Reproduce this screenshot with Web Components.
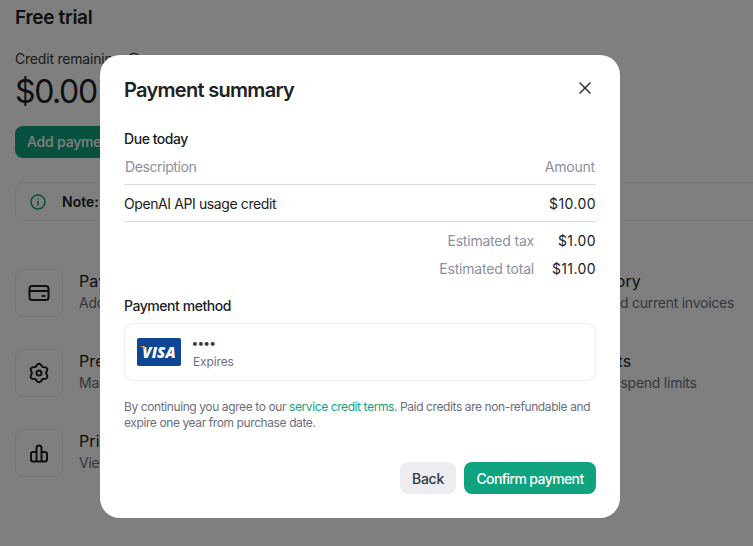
<!DOCTYPE html>
<html lang="en">
<head>
<meta charset="utf-8">
<title>Payment summary</title>
<style>
  html, body { margin: 0; height: 100%; overflow: hidden; background: #fff; }
  body { font-family: Inter, "Liberation Sans", sans-serif; color: #202123; }
</style>
</head>
<body>
<billing-page>
  <billing-link slot="links" title="Payment methods" text="Add or manage payment method" icon="card"></billing-link>
  <billing-link slot="links" title="Billing history" text="View past and current invoices" icon="none"></billing-link>
  <billing-link slot="links" title="Preferences" text="Manage billing information" icon="gear"></billing-link>
  <billing-link slot="links" title="Usage limits" text="Update your spend limits" icon="none"></billing-link>
  <billing-link slot="links" title="Pricing" text="View pricing and FAQs" icon="bars"></billing-link>
</billing-page>
<modal-backdrop>
  <payment-summary>
    <amount-row slot="totals" label="Estimated tax" value="$1.00"></amount-row>
    <amount-row slot="totals" label="Estimated total" value="$11.00"></amount-row>
    <payment-card slot="method"></payment-card>
  </payment-summary>
</modal-backdrop>

<script>
// Page behind the dialog
class BillingPage extends HTMLElement {
  constructor() {
    super();
    this.attachShadow({ mode: 'open' });
  }

  connectedCallback() {
    this.shadowRoot.innerHTML = `
      <style>
        :host { display: block; padding: 7px 0 0 15px; color: #202123; }
        h1 { margin: 0; font-size: 19px; line-height: 22px; font-weight: 600; letter-spacing: -0.3px; }
        .credit { display: flex; align-items: center; gap: 6px; margin-top: 21px; font-size: 14px; line-height: 18px; color: #353740; letter-spacing: -0.2px; }
        .credit svg { width: 14px; height: 14px; }
        .amount { font-size: 32px; line-height: 40px; margin-top: 4px; letter-spacing: -1.4px; color: #202123; }
        .add { display: inline-block; margin-top: 14px; height: 32px; line-height: 32px; padding: 0 12px; border-radius: 8px; background: #10a37f; color: #fff; font-size: 14px; font-weight: 500; letter-spacing: -0.2px; }
        .note { display: flex; align-items: center; gap: 16px; margin-top: 24px; height: 37px; padding-left: 14px; border: 1px solid #ececf1; border-right: 0; border-radius: 8px 0 0 8px; font-size: 14px; }
        .note svg { width: 16px; height: 16px; flex: none; }
        .note b { font-weight: 600; }
        .links { display: grid; grid-template-columns: 459px 1fr; gap: 32px 0; margin-top: 48px; }
      </style>
      <h1>Free trial</h1>
      <div class="credit">Credit remaining
        <svg viewBox="0 0 16 16" fill="none" stroke="#353740" stroke-width="1.4"><circle cx="8" cy="8" r="6.5"/></svg>
      </div>
      <div class="amount">$0.00</div>
      <div class="add">Add payment details</div>
      <div class="note">
        <svg viewBox="0 0 16 16" fill="none" stroke="#10a37f" stroke-width="1.5" stroke-linecap="round"><circle cx="8" cy="8" r="7"/><path d="M8 7.500v3.600M8 4.900v.1"/></svg>
        <span><b>Note:</b> This does not reflect the status of your bill.</span>
      </div>
      <div class="links"><slot name="links"></slot></div>
    `;
  }
}

const ICONS = {
  card: '<rect x="2.500" y="5" width="19" height="14" rx="2.500"/><path d="M2.500 10h19M15.500 15h2"/>',
  gear: '<path d="M8.500 5.940Q12 -.5 15.500 5.940Q22.800 5.750 19 12Q22.800 18.250 15.500 18.060Q12 24.500 8.500 18.060Q1.200 18.250 5 12Q1.200 5.750 8.500 5.940z"/><circle cx="12" cy="12" r="2.500"/>',
  bars: '<path d="M9.500 20.500V7a2.500 2.500 0 0 1 5 0v13.500M9.500 20.500V11H6a2 2 0 0 0-2 2v5.500a2 2 0 0 0 2 2zM14.500 20.500V11H18a2 2 0 0 1 2 2v5.500a2 2 0 0 1-2 2zM9.500 20.500h5"/>'
};

class BillingLink extends HTMLElement {
  constructor() {
    super();
    this.attachShadow({ mode: 'open' });
  }

  connectedCallback() {
    const icon = ICONS[this.getAttribute('icon')] || '';
    this.shadowRoot.innerHTML = `
      <style>
        :host { display: flex; gap: 16px; height: 48px; }
        .box { width: 46px; height: 46px; border: 1px solid #ececf1; border-radius: 8px; display: flex; align-items: center; justify-content: center; flex: none; }
        svg { width: 24px; height: 24px; fill: none; stroke: #202123; stroke-width: 2; stroke-linecap: round; stroke-linejoin: round; }
        .text { padding-top: 1px; }
        .t { font-size: 16px; line-height: 22px; color: #202123; letter-spacing: 0.1px; white-space: nowrap; }
        .d { font-size: 14px; line-height: 20px; margin-top: 1px; color: #6e6e80; letter-spacing: -0.25px; white-space: nowrap; }
      </style>
      <div class="box"><svg viewBox="0 0 24 24">${icon}</svg></div>
      <div class="text">
        <div class="t">${this.getAttribute('title')}</div>
        <div class="d">${this.getAttribute('text')}</div>
      </div>
    `;
  }
}

// Dark layer and dialog on top of it
class ModalBackdrop extends HTMLElement {
  constructor() {
    super();
    this.attachShadow({ mode: 'open' });
  }

  connectedCallback() {
    this.shadowRoot.innerHTML = `
      <style>
        :host { position: fixed; inset: 0; background: rgba(0, 0, 0, 0.5); display: block; }
      </style>
      <slot></slot>
    `;
  }
}

class PaymentSummary extends HTMLElement {
  constructor() {
    super();
    this.attachShadow({ mode: 'open' });
  }

  connectedCallback() {
    this.shadowRoot.innerHTML = `
      <style>
        :host { position: absolute; left: 100px; top: 55px; width: 472px; height: 415px; padding: 24px; background: #fff; border-radius: 20px; display: block; color: #202123; }
        header { display: flex; justify-content: space-between; align-items: center; height: 22px; }
        h2 { margin: 0; font-size: 20px; line-height: 22px; font-weight: 600; letter-spacing: -0.7px; }
        .close { width: 16px; height: 16px; margin-right: 3px; margin-top: -4px; }
        h3 { margin: 0; font-size: 14px; line-height: 18px; font-weight: 500; letter-spacing: -0.45px; color: #202123; }
        .due { margin-top: 29px; }
        .head, .line { display: flex; justify-content: space-between; letter-spacing: -0.4px; font-size: 14px; line-height: 20px; }
        .head { color: #8e8ea0; margin-top: 9px; padding: 0 1px 7px; border-bottom: 1px solid #d9d9e3; }
        .head span:last-child { letter-spacing: -0.2px; }
        .line { padding: 9px 0 7px; border-bottom: 1px solid #d9d9e3; }
        .line span:last-child { letter-spacing: 0.4px; }
        .totals { display: flex; flex-direction: column; gap: 8px; margin-top: 9px; }
        .method { margin-top: 18px; }
        .card { margin-top: 8px; }
        p { margin: 18px 0 0; font-size: 12px; line-height: 16px; color: #6e6e80; letter-spacing: -0.4px; }
        a { color: #10a37f; text-decoration: none; }
        footer { display: flex; justify-content: flex-end; gap: 8px; margin-top: 31px; }
        button { height: 32px; border: 0; border-radius: 8px; padding: 0; font: 500 14px Inter, "Liberation Sans", sans-serif; letter-spacing: -0.25px; }
        .back { width: 56px; background: #ececf1; color: #353740; }
        .confirm { width: 132px; background: #10a37f; color: #fff; letter-spacing: -0.6px; }
      </style>
      <header>
        <h2>Payment summary</h2>
        <svg class="close" viewBox="0 0 16 16" fill="none" stroke="#353740" stroke-width="1.6" stroke-linecap="round"><path d="M3 3l10 10M13 3L3 13"/></svg>
      </header>
      <h3 class="due">Due today</h3>
      <div class="head"><span>Description</span><span>Amount</span></div>
      <div class="line"><span>OpenAI API usage credit</span><span>$10.00</span></div>
      <div class="totals"><slot name="totals"></slot></div>
      <h3 class="method">Payment method</h3>
      <div class="card"><slot name="method"></slot></div>
      <p>By continuing you agree to our <a>service credit terms</a>. Paid credits are non-refundable and expire one year from purchase date.</p>
      <footer>
        <button class="back">Back</button>
        <button class="confirm">Confirm payment</button>
      </footer>
    `;
  }
}

class AmountRow extends HTMLElement {
  constructor() {
    super();
    this.attachShadow({ mode: 'open' });
  }

  connectedCallback() {
    this.shadowRoot.innerHTML = `
      <style>
        :host { display: flex; justify-content: flex-end; gap: 16px; font-size: 14px; line-height: 20px; letter-spacing: -0.2px; }
        .k { color: #8e8ea0; }
        .v { color: #202123; min-width: 46px; text-align: right; letter-spacing: 0.4px; }
      </style>
      <span class="k">${this.getAttribute('label')}</span>
      <span class="v">${this.getAttribute('value')}</span>
    `;
  }
}

class PaymentCard extends HTMLElement {
  constructor() {
    super();
    this.attachShadow({ mode: 'open' });
  }

  connectedCallback() {
    this.shadowRoot.innerHTML = `
      <style>
        :host { display: flex; align-items: center; gap: 12px; height: 56px; padding: 0 12px; border: 1px solid #ececf1; border-radius: 8px; }
        .visa { position: relative; width: 44px; height: 28px; border-radius: 2px; background: #0e4595; color: #fff; display: flex; align-items: center; justify-content: center; flex: none; font: italic 800 15px "Open Sans", "Liberation Sans", sans-serif; letter-spacing: 0.1px; }
        .visa svg { position: absolute; left: 3px; top: 8px; width: 8px; height: 5px; }
        .info { padding-top: 2px; }
        .dots { font-size: 12px; line-height: 12px; color: #353740; letter-spacing: 0.2px; font-weight: 700; margin-left: -1px; }
        .exp { font-size: 12px; line-height: 16px; color: #6e6e80; margin-top: 5px; letter-spacing: -0.12px; }
      </style>
      <div class="visa"><svg viewBox="0 0 8 5"><path d="M0 0h4.500l1.800 4.500Q4 1.200 0 0z" fill="#f2a81d"/></svg>VISA</div>
      <div class="info">
        <div class="dots">••••</div>
        <div class="exp">Expires</div>
      </div>
    `;
  }
}

customElements.define('billing-page', BillingPage);
customElements.define('billing-link', BillingLink);
customElements.define('modal-backdrop', ModalBackdrop);
customElements.define('payment-summary', PaymentSummary);
customElements.define('amount-row', AmountRow);
customElements.define('payment-card', PaymentCard);
</script>
</body>
</html>
